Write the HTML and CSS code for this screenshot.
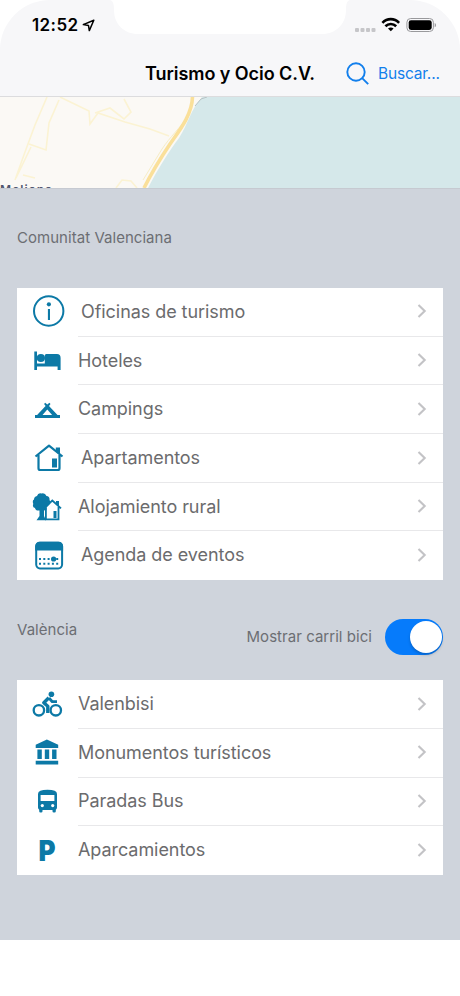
FILE: index.html
```html
<!DOCTYPE html>
<html lang="es">
<head>
<meta charset="utf-8">
<title>Turismo y Ocio C.V.</title>
<link rel="stylesheet" href="styles.css">
</head>
<body>
<svg class="defs" width="0" height="0" aria-hidden="true">
  <symbol id="chev" viewBox="0 0 10 16"><path d="M1.500 2 7.700 8 1.500 14" fill="none" stroke="#c3c3c6" stroke-width="2.100"/></symbol>
</svg>
<div class="screen">
  <header class="top">
    <svg class="notch" width="240" height="35" viewBox="0 0 240 35"><path d="M0 0H240C236.500 1 236 5 236 10C236 24 226 34 212 34H28C14 34 4 24 4 10C4 5 3.500 1 0 0Z" fill="#fff"/></svg>
    <div class="status">
      <div class="clock"><span class="time">12:52</span>
        <svg width="13" height="13" viewBox="0 0 13 13"><path d="M11.800 1.200 1.300 5.600 6.500 6.500 7.300 11.600Z" fill="none" stroke="#000" stroke-width="1.500" stroke-linejoin="round"/></svg>
      </div>
      <svg class="signals" width="84" height="18" viewBox="0 0 84 18">
        <g fill="#c6c6c9"><rect x="2" y="12" width="4" height="4" rx="1"/><rect x="7.500" y="12" width="4" height="4" rx="1"/><rect x="13" y="12" width="4" height="4" rx="1"/><rect x="18.500" y="12" width="4" height="4" rx="1"/></g>
        <g fill="none" stroke="#000" stroke-width="2.600"><path d="M29.400 6.800C34.200 1.900 41.300 1.900 46.100 6.800"/><path d="M32.400 10.200C35.500 7.200 40.100 7.200 43.200 10.200"/></g>
        <path d="M35 12.600C36.700 11.200 38.900 11.200 40.600 12.600L37.800 15.300Z"/>
        <rect x="53.900" y="2.500" width="26.500" height="13" rx="3.800" fill="none" stroke="#99999c"/>
        <rect x="55.700" y="4.200" width="23" height="9.700" rx="2.300"/>
        <path d="M81.700 6.900C83.500 7.600 83.500 10.500 81.700 11.200Z" fill="#99999c"/>
      </svg>
    </div>
    <div class="nav">
      <h1 class="title">Turismo y Ocio C.V.</h1>
      <a class="search"><svg width="24" height="24" viewBox="0 0 24 24"><g fill="none" stroke="#127fec" stroke-width="1.900"><circle cx="10" cy="10" r="8.700"/><path d="M15.900 15.900 22.200 22.200"/></g></svg><span class="search-label">Buscar...</span></a>
    </div>
  </header>

  <div class="map">
    <svg width="460" height="91" viewBox="0 0 460 91">
      <rect width="460" height="91" fill="#fbf9f5"/>
      <path d="M202 0H460V91H148C157 73 170 53 179 41C188 27 191 12 202 0Z" fill="#d5e8ea"/>
      <g fill="none" stroke="#fbf3d3" stroke-width="1.600">
        <path d="M47 0 35 28 25 55 15 83M59 3 49 26 46 53 29 47M60 0 89 14 90 27 98 16 125 25 150 32 169 39M95 16 110 11 124 22 131 15 124 2M31 50 16 81M23 78 35 81M116 91 122 83 131 84 137 91"/>
      </g>
      <path d="M190 17C179 32 170 40 162 52L143 83" fill="none" stroke="#f7edc5"/>
      <path d="M192.500 0C192 18 179 34 170 47C158 65 150 79 144 91" fill="none" stroke="#fae09a" stroke-width="3.600"/>
      <path d="M195 9 201 2 207 0" fill="none" stroke="#b8c4c5"/>
      <text class="place" x="0" y="97" textLength="52">Meliana</text>
    </svg>
  </div>

  <main class="content">
    <div class="section-head first"><h2 class="label region">Comunitat Valenciana</h2></div>
    <ul class="card">
      <li class="row"><svg class="icon" viewBox="0 0 36 36"><circle cx="19.700" cy="18" r="14.700" fill="none" stroke="#0c79a6" stroke-width="2"/><circle cx="19.900" cy="11.300" r="2.100"/><path d="M18.900 16H21V27H18.900Z"/></svg><span class="name wide">Oficinas de turismo</span><svg class="chevron"><use href="#chev"/></svg></li>
      <li class="row"><svg class="icon" viewBox="0 0 36 36"><path d="M5.300 9.500H8V21.500H15.800V13.500Q15.800 12 17.300 12H28Q31.600 12 31.600 16V28H28.600V24.500H8V28H5.300Z"/><circle cx="11.900" cy="16" r="4.100"/></svg><span class="name">Hoteles</span><svg class="chevron"><use href="#chev"/></svg></li>
      <li class="row"><svg class="icon" viewBox="0 0 36 36"><path d="M16.200 11.800 18.300 13.600 20.400 11.800 21.500 13 20 15 28.500 24H31V27H6V24H8.100L16.600 15 15.100 13ZM18.300 18.400 13.500 24H23.100Z" fill-rule="evenodd"/></svg><span class="name">Campings</span><svg class="chevron"><use href="#chev"/></svg></li>
      <li class="row"><svg class="icon" viewBox="0 0 36 36"><path d="M6.500 16.500 20 5.700 33.500 16.500M9.500 15V28.200Q9.500 30 11.300 30H28.700Q30.500 30 30.500 28.200V15" fill="none" stroke="#0c79a6" stroke-width="2.200" stroke-linejoin="round"/><path d="M26.800 7.500H31V14.500L26.800 11.200ZM23 18.500H28V27.500H23Z"/></svg><span class="name wide">Apartamentos</span><svg class="chevron"><use href="#chev"/></svg></li>
      <li class="row"><svg class="icon" viewBox="0 0 36 36"><path d="M8 8Q9 4.500 12.500 5.500Q16 4.500 17.500 8Q21 8.500 20.500 12Q22.500 15 20 18.500Q18.500 22.500 15 22.500V28L17 32.300H7.500L10.500 28V22.500Q6.500 23 6 20Q3 19 4.300 16Q3 12.500 5 11.500Q5 8.500 8 8Z"/><path d="M17.500 19.500 23.300 13.500 29.500 19.500V31H17.500Z" fill="#fff"/><path d="M15.500 19.800 23.300 12.500 32 20.300M16.900 19.500V31.400H29.500V19" fill="none" stroke="#0c79a6" stroke-width="1.800"/><path d="M27 13H30V18.500L27 15.800ZM24.500 23H27.500V30H24.500Z"/></svg><span class="name">Alojamiento rural</span><svg class="chevron"><use href="#chev"/></svg></li>
      <li class="row"><svg class="icon" viewBox="0 0 36 36"><rect x="7.200" y="5.800" width="25.900" height="25.600" rx="3.800" fill="none" stroke="#0c79a6" stroke-width="2"/><path d="M6.200 13.500V9.500Q6.200 4.800 10.800 4.800H29.500Q34.100 4.800 34.100 9.500V13.500Z"/><path d="M10 22H31M10 26.800H31" stroke="#0c79a6" stroke-width="2.100" stroke-dasharray="2 2.300"/><circle cx="24.600" cy="22" r="2.600"/></svg><span class="name wide">Agenda de eventos</span><svg class="chevron"><use href="#chev"/></svg></li>
    </ul>

    <div class="section-head second">
      <h2 class="label city">València</h2>
      <div class="toggle"><span class="label toggle-label">Mostrar carril bici</span><span class="switch"><span class="knob"></span></span></div>
    </div>
    <ul class="card">
      <li class="row"><svg class="icon" viewBox="0 0 36 36"><g fill="none" stroke="#0c79a6"><circle cx="9.900" cy="24.300" r="5.200" stroke-width="2.300"/><circle cx="26.800" cy="24.300" r="5.200" stroke-width="2.300"/><path d="M19.800 11.800 14.800 16.800 18.800 20.300V27" stroke-width="3.400" stroke-linejoin="round"/><path d="M20 12 23.300 15.700H28" stroke-width="2.800" stroke-linejoin="round"/></g><circle cx="22.400" cy="8.300" r="2.800"/></svg><span class="name">Valenbisi</span><svg class="chevron"><use href="#chev"/></svg></li>
      <li class="row"><svg class="icon" viewBox="0 0 36 36"><path d="M6.700 10.800 17.900 5.500 29.200 10.800V14H6.700ZM8.400 15.500H12.800V25H8.400ZM15.800 15.500H20.200V25H15.800ZM23.100 15.500H27.500V25H23.100ZM6.700 26.700H29.200V30.600H6.700Z"/></svg><span class="name">Monumentos turísticos</span><svg class="chevron"><use href="#chev"/></svg></li>
      <li class="row"><svg class="icon" viewBox="0 0 36 36"><path d="M9 11Q9 6.800 18.500 6.800Q28 6.800 28 11V24.500Q28 26 26.800 26.800V28.200Q26.800 29.400 25.500 29.400H24.800Q23.500 29.400 23.500 28.200V27H13.500V28.200Q13.500 29.400 12.200 29.400H11.500Q10.200 29.400 10.200 28.200V26.800Q9 26 9 24.500Z"/><rect x="11.600" y="12" width="13.800" height="6" fill="#fff"/><circle cx="13.300" cy="22.600" r="1.600" fill="#fff"/><circle cx="23.700" cy="22.600" r="1.600" fill="#fff"/></svg><span class="name">Paradas Bus</span><svg class="chevron"><use href="#chev"/></svg></li>
      <li class="row"><svg class="icon" viewBox="0 0 36 36"><text class="parking" x="9.500" y="29.200" textLength="17" lengthAdjust="spacingAndGlyphs">P</text></svg><span class="name">Aparcamientos</span><svg class="chevron"><use href="#chev"/></svg></li>
    </ul>
  </main>
</div>
</body>
</html>
```

FILE: styles.css
```css
* { box-sizing: border-box; }
body { margin: 0; background: #fff; font-family: Inter, "Liberation Sans", sans-serif; }
h1, h2, ul { margin: 0; padding: 0; font-weight: 400; list-style: none; }
svg { display: block; flex: none; }
.defs { position: absolute; }
.screen { width: 460px; height: 996px; overflow: hidden; background: #fff; }

.top { position: relative; height: 97px; background: #f7f7f9; border-radius: 50px 50px 0 0; border-bottom: 1px solid #dcdcde; }
.notch { position: absolute; left: 110px; top: 0; }
.status { display: flex; justify-content: space-between; height: 50px; padding: 16px 23px 0 32px; }
.clock { display: flex; gap: 4px; height: 18px; align-items: center; }
.time { font-size: 17px; font-weight: 600; line-height: 18px; letter-spacing: 0.4px; width: 46px; }
.nav { display: flex; height: 47px; align-items: center; padding-left: 145px; }
.title { width: 201px; font-size: 18px; font-weight: 600; letter-spacing: -0.05px; white-space: nowrap; }
.search { display: flex; align-items: center; gap: 8px; color: #127fec; }
.search-label { font-size: 15.500px; letter-spacing: -0.2px; white-space: nowrap; }

.map { height: 91px; }
.place { font-size: 12px; font-weight: 600; fill: #50566f; }

.content { height: 752px; padding: 0 17px; background: #cfd4dc; border-top: 1px solid #c6cad1; }
.section-head { display: flex; justify-content: space-between; }
.first { height: 99px; padding-top: 39px; }
.second { height: 100px; padding-top: 39px; }
.label { font-size: 15px; line-height: 20px; letter-spacing: 0.04px; color: #6c6e73; white-space: nowrap; }
.toggle { display: flex; align-items: center; gap: 13px; height: 36px; }
.city { margin-top: 1px; }
.toggle-label { margin-top: -1px; }
.switch { display: flex; justify-content: flex-end; width: 58px; height: 36px; padding: 2px 1.500px; border-radius: 18px; background: #067bfb; }
.knob { width: 32px; height: 32px; border-radius: 50%; background: #fff; box-shadow: 0 2px 3px rgba(0, 0, 0, .2); }

.card { background: #fff; }
.row { position: relative; display: flex; align-items: center; height: 48.700px; padding: 0 16px 1.800px 12px; }
.row:not(:last-child)::after { content: ""; position: absolute; left: 61px; right: 0; bottom: 0; height: 1px; background: #e8e8ea; }
.icon { width: 36px; height: 36px; fill: #0c79a6; }
.name { flex: 1; margin-left: 13px; font-size: 18px; letter-spacing: -0.06px; color: #6b6b6d; white-space: nowrap; }
.wide { margin-left: 16px; }
.chevron { width: 10px; height: 16px; }
.parking { font-size: 29px; font-weight: 900; }
```
